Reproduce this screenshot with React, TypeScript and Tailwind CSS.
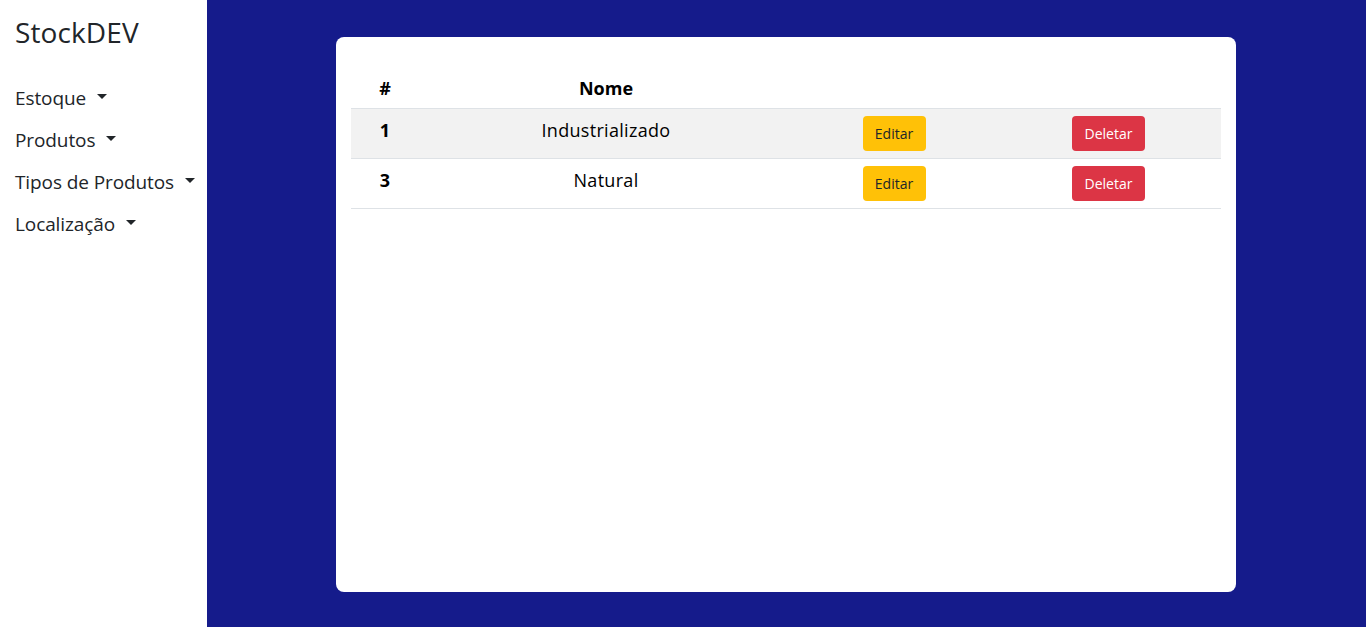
import React from "react";

const Caret = () => (
  <span className="inline-block ml-[11px] align-middle w-0 h-0 border-l-[5px] border-r-[5px] border-t-[5px] border-l-transparent border-r-transparent border-t-[#212529] relative top-[-2px]" />
);

const rows = [
  { id: 1, nome: "Industrializado" },
  { id: 3, nome: "Natural" },
];

export default function App() {
  return (
    <div
      className="flex w-full h-[627px] overflow-hidden text-[#212529]"
      style={{ fontFamily: '"Open Sans", "Noto Sans", sans-serif' }}
    >
      <aside className="w-[207px] shrink-0 bg-white pl-[15px] pt-[12px]">
        <div className="text-[28px] leading-[40px] text-[#212529] tracking-[0.1px]">StockDEV</div>
        <nav className="mt-[31px] flex flex-col gap-[12px] text-[19px] leading-[30px] tracking-[-0.1px]">
          {["Estoque", "Produtos", "Tipos de Produtos", "Localização"].map((t) => (
            <div key={t} className="flex items-center">
              <span>{t}</span>
              <Caret />
            </div>
          ))}
        </nav>
      </aside>
      <main className="flex-1 bg-[#151b8b] pl-[129px] pt-[37px]">
        <div className="w-[900px] h-[555px] bg-white rounded-[8px] px-[15px] pt-[22px]">
          <div className="grid grid-cols-[68px_374px_202px_227px] h-[50px] items-end pb-[6px] border-b border-[#dee2e6] text-[18px] leading-[27px] font-bold text-black">
            <div className="text-center">#</div>
            <div className="text-center">Nome</div>
            <div />
            <div />
          </div>
          {rows.map((r, i) => (
            <div
              key={r.id}
              className={`grid grid-cols-[68px_374px_202px_227px] h-[50px] border-b border-[#dee2e6] text-[18px] text-black ${
                i === 0 ? "bg-[#f2f2f2]" : "bg-white"
              }`}
            >
              <div className="text-center font-bold pt-[8px] leading-[27px]">{r.id}</div>
              <div className="text-center pt-[8px] leading-[27px] tracking-[0.3px]">{r.nome}</div>
              <div className="flex justify-center pt-[7px]">
                <button className="h-[35px] w-[63px] rounded-[4px] bg-[#ffc107] text-[14px] text-[#212529]">
                  Editar
                </button>
              </div>
              <div className="flex justify-center pt-[7px]">
                <button className="h-[35px] w-[73px] rounded-[4px] bg-[#dc3545] text-[14px] text-white">
                  Deletar
                </button>
              </div>
            </div>
          ))}
        </div>
      </main>
    </div>
  );
}
